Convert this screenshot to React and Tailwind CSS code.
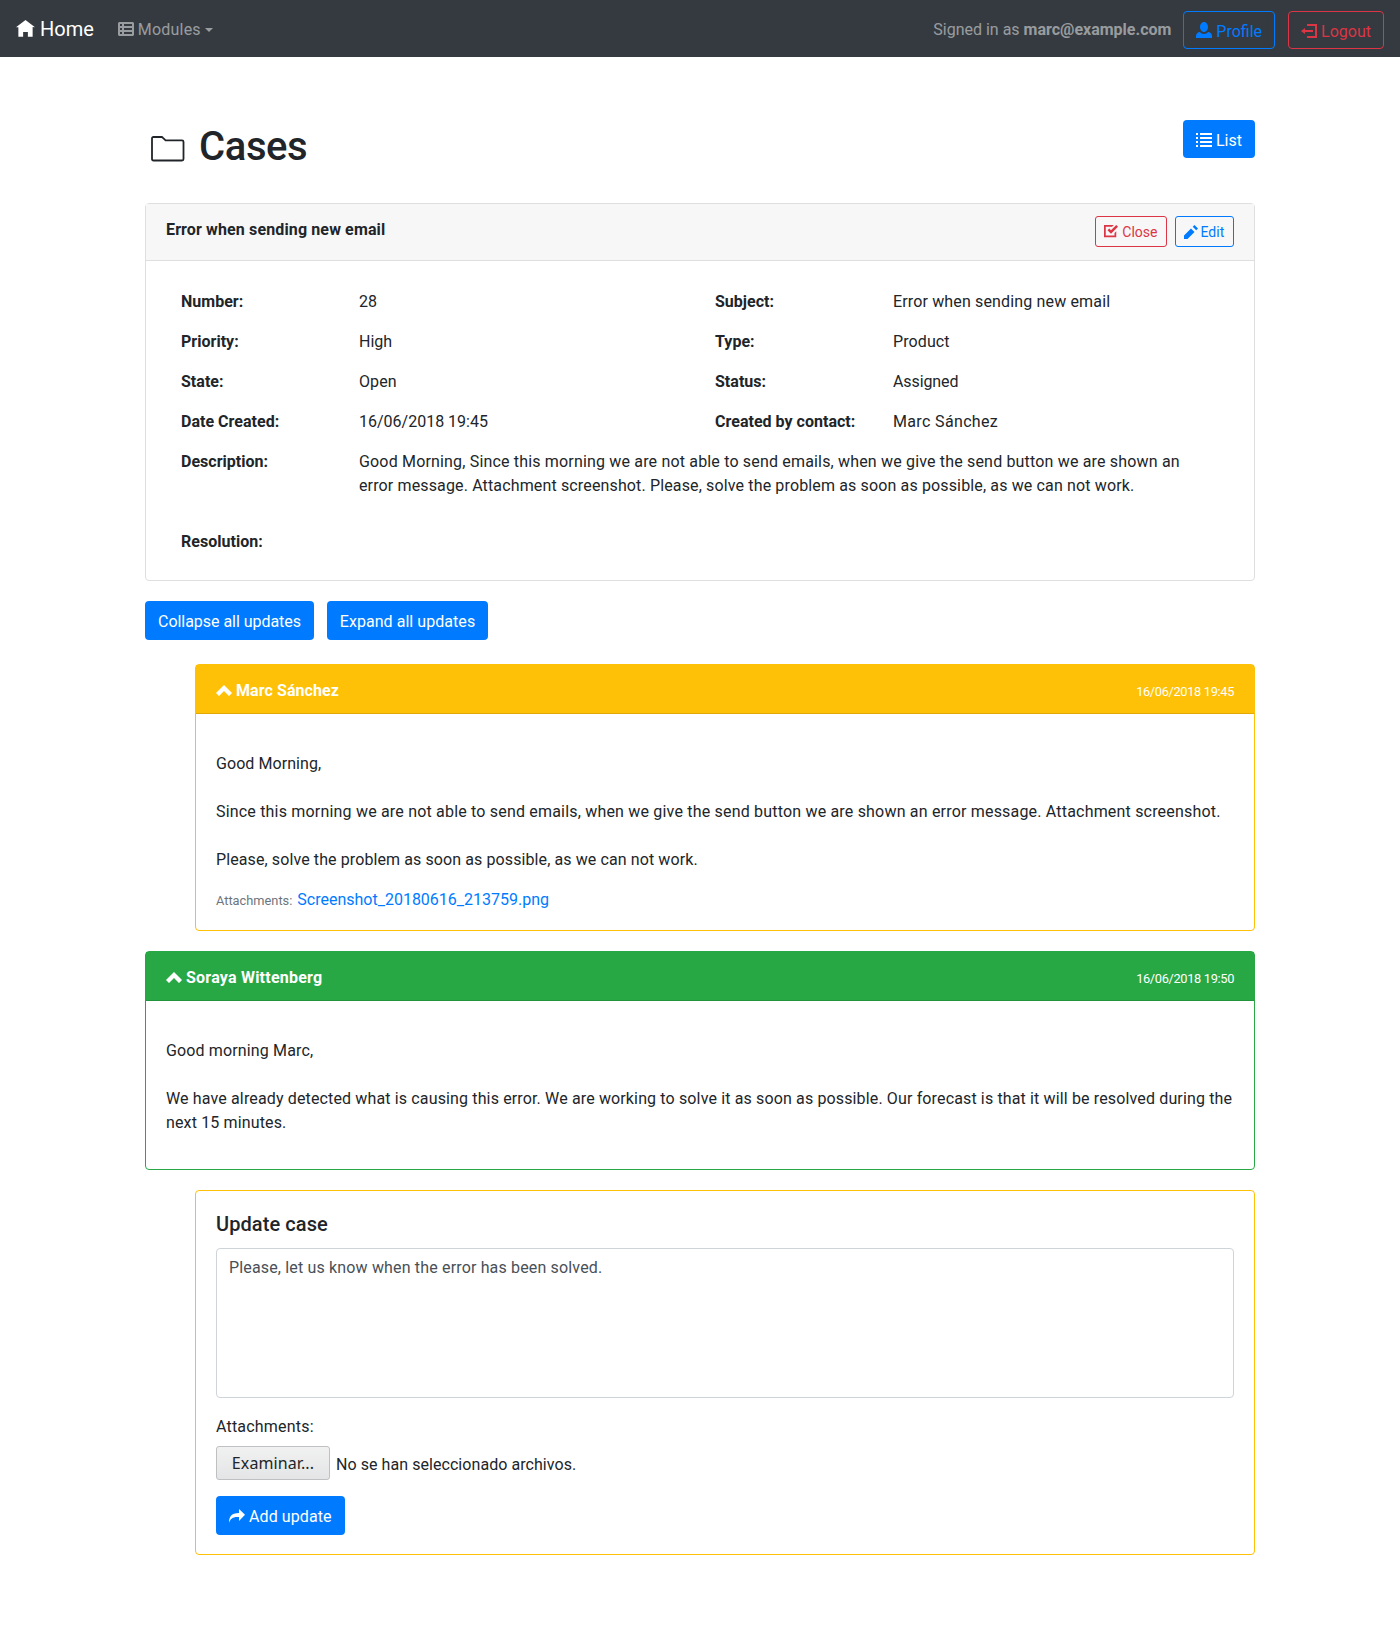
import React from "react";

const ICONS = {
  home: "M4 0l-4 3h1v4h2v-2h2v2h2v-4.03l1 .03-4-3z",
  sheet:
    "M.75 0c-.41 0-.75.34-.75.75v5.5c0 .41.34.75.75.75h6.5c.41 0 .75-.34.75-.75v-5.5c0-.41-.34-.75-.75-.75h-6.5zm.25 1h1v1h-1v-1zm2 0h4v1h-4v-1zm-2 2h1v1h-1v-1zm2 0h4v1h-4v-1zm-2 2h1v1h-1v-1zm2 0h4v1h-4v-1z",
  person:
    "M4 0c-1.1 0-2 1.12-2 2.5s.9 2.5 2 2.5 2-1.12 2-2.5-.9-2.5-2-2.5zm-2.09 5c-1.06.05-1.91.92-1.91 2v1h8v-1c0-1.08-.84-1.95-1.91-2-.54.61-1.28 1-2.09 1-.81 0-1.55-.39-2.09-1z",
  logout: "M3 0v1h4v5h-4v1h5v-7h-5zm-1 2l-2 1.5 2 1.5v-1h4v-1h-4v-1z",
  list: "M0 0v1h1v-1h-1zm2 0v1h6v-1h-6zm-2 2v1h1v-1h-1zm2 0v1h6v-1h-6zm-2 2v1h1v-1h-1zm2 0v1h6v-1h-6zm-2 2v1h1v-1h-1zm2 0v1h6v-1h-6z",
  task: "M0 0v7h7v-3.41l-1 1v1.41h-5v-5h3.59l1-1h-5.59zm7 0l-3 3-1-1-1 1 2 2 4-4-1-1z",
  pencil: "M6 0l-1 1 2 2 1-1-2-2zm-2 2l-4 4v2h2l4-4-2-2z",
  chevron: "M4 1l-4 4 1.5 1.5 2.5-2.5 2.5 2.5 1.5-1.5-4-4z",
  share: "M5 0v2c-4 0-5 2.05-5 5 .52-1.98 2-3 4-3h1v2l3-3.16-3-2.84z",
};

function Icon({ name, className = "size-4" }) {
  return (
    <svg viewBox="0 0 8 8" fill="currentColor" className={"shrink-0 " + className}>
      <path d={ICONS[name]} />
    </svg>
  );
}

function Field({ label, value, wide, className = "" }) {
  return (
    <div className={wide ? "col-span-6 grid grid-cols-6" : "col-span-3 grid grid-cols-3"}>
      <div className="px-[15px] font-bold tracking-[0.02px] whitespace-nowrap">{label}</div>
      <div className={(wide ? "col-span-5 px-[15px] " : "col-span-2 px-[15px] ") + className}>{value}</div>
    </div>
  );
}

function UpdateHeader({ name, date, className, nameClass }) {
  return (
    <div
      className={
        "flex h-[49px] items-center justify-between border-b border-black/12 px-5 pt-[3px] text-white " + className
      }
    >
      <div className={"flex items-center gap-1 font-bold " + nameClass}>
        <Icon name="chevron" />
        {name}
      </div>
      <div className="pt-0.5 text-[12.8px] tracking-[-0.33px]">{date}</div>
    </div>
  );
}

export default function App() {
  return (
    <div className="min-h-[1636px] bg-white font-['Roboto',sans-serif] text-base leading-6 text-[#212529]">
      <nav className="flex h-[57px] items-center bg-[#343a40] px-4">
        <div className="flex items-center gap-[5px] pt-px text-xl text-white">
          <Icon name="home" className="size-[19px]" />
          Home
        </div>
        <div className="ml-6 flex items-center pt-[3px] text-white/50">
          <Icon name="sheet" className="mr-1 size-4" />
          <span className="tracking-[0.2px]">Modules</span>
          <span className="ml-1 border-x-[4.8px] border-t-[4.8px] border-x-transparent border-t-white/50" />
        </div>
        <div className="ml-auto flex items-center gap-[13px]">
          <div className="-mr-px pt-0.5 text-white/50">
            Signed in as <b>marc@example.com</b>
          </div>
          <button className="mt-[3px] flex h-[38px] items-center gap-1 rounded border border-[#007bff] px-3 pt-1 text-[#007bff]">
            <Icon name="person" className="mb-1 size-4" />
            Profile
          </button>
          <button className="mt-[3px] flex h-[38px] items-center gap-1 rounded border border-[#dc3545] px-3 pt-1 text-[#dc3545]">
            <Icon name="logout" />
            Logout
          </button>
        </div>
      </nav>

      <main className="mx-auto w-[1110px] pt-[63px]">
        <div className="flex h-[83px] items-start justify-between">
          <h1 className="mt-[3px] flex items-center text-[40px] leading-[48px] font-medium tracking-[-0.4px]">
            <svg
              viewBox="0 0 34 26"
              className="mt-[3px] mr-3.5 ml-1.5 h-[26px] w-[34px]"
              fill="none"
              stroke="currentColor"
              strokeWidth="1.8"
            >
              <path d="M1 2.5Q1 1 2.5 1H10.5Q11.3 1 12 1.8L14.6 4.3H31Q32.5 4.3 32.5 5.8V23Q32.5 24.5 31 24.5H2.5Q1 24.5 1 23Z" />
            </svg>
            Cases
          </h1>
          <button className="flex h-[38px] items-center gap-1 rounded bg-[#007bff] px-[13px] pt-1 text-white">
            <Icon name="list" />
            List
          </button>
        </div>

        <section className="h-[378px] rounded border border-[#dfdfdf]">
          <div className="flex h-[57px] items-start justify-between border-b border-[#dfdfdf] bg-[#f7f7f7] px-5 pt-3">
            <div className="mt-0.5 font-bold tracking-[0.13px]">Error when sending new email</div>
            <div className="flex gap-2 text-sm">
              <button className="flex h-[31px] items-center gap-1 rounded-[3px] border border-[#dc3545] px-2 text-[#dc3545]">
                <Icon name="task" className="size-3.5" />
                Close
              </button>
              <button className="flex h-[31px] w-[59.5px] items-center gap-[3px] rounded-[3px] border border-[#007bff] pl-2 text-[#007bff]">
                <Icon name="pencil" className="size-3.5" />
                Edit
              </button>
            </div>
          </div>
          <div className="grid grid-cols-6 gap-y-4 px-5 pt-[29px]">
            <Field label="Number:" value="28" />
            <Field label="Subject:" value="Error when sending new email" className="tracking-[0.15px]" />
            <Field label="Priority:" value="High" />
            <Field label="Type:" value="Product" className="tracking-[0.1px]" />
            <Field label="State:" value="Open" className="tracking-[0.1px]" />
            <Field label="Status:" value="Assigned" className="tracking-[-0.1px]" />
            <Field label="Date Created:" value="16/06/2018 19:45" />
            <Field label="Created by contact:" value="Marc Sánchez" className="tracking-[0.35px]" />
            <Field
              wide
              label="Description:"
              value={
                <>
                  <span className="block tracking-[0.172px] whitespace-nowrap">
                    Good Morning, Since this morning we are not able to send emails, when we give the send button we are
                    shown an
                  </span>
                  <span className="block tracking-[0.14px] whitespace-nowrap">
                    error message. Attachment screenshot. Please, solve the problem as soon as possible, as we can not
                    work.
                  </span>
                </>
              }
            />
            <div className="col-span-6 pt-4">
              <Field wide label="Resolution:" value="" />
            </div>
          </div>
        </section>

        <div className="mt-5 flex gap-[13px] text-white">
          <button className="h-[39px] w-[169px] rounded bg-[#007bff] pt-0.5 tracking-[-0.04px]">
            Collapse all updates
          </button>
          <button className="h-[39px] w-[161px] rounded bg-[#007bff] pt-0.5 tracking-[0.05px]">
            Expand all updates
          </button>
        </div>

        <section className="mt-6 ml-[50px] h-[267px] rounded border border-[#ffc107]">
          <UpdateHeader
            name="Marc Sánchez"
            date="16/06/2018 19:45"
            className="bg-[#ffc107]"
            nameClass="tracking-[0.08px]"
          />
          <div className="px-5 pt-[38px]">
            <p className="mb-6 tracking-[0.06px]">Good Morning,</p>
            <p className="mb-6 tracking-[0.19px] whitespace-nowrap">
              Since this morning we are not able to send emails, when we give the send button we are shown an error
              message. Attachment screenshot.
            </p>
            <p className="mb-4 tracking-[0.1px]">Please, solve the problem as soon as possible, as we can not work.</p>
            <p>
              <span className="mr-[5px] text-[12.8px] text-[#6c757d]">Attachments:</span>
              <a className="text-[#007bff]">Screenshot_20180616_213759.png</a>
            </p>
          </div>
        </section>

        <section className="mt-5 h-[219px] rounded border border-[#28a745]">
          <UpdateHeader
            name="Soraya Wittenberg"
            date="16/06/2018 19:50"
            className="bg-[#28a745]"
            nameClass="tracking-[0.22px]"
          />
          <div className="px-5 pt-[38px] tracking-[0.14px]">
            <p className="mb-6">Good morning Marc,</p>
            <p>
              <span className="block whitespace-nowrap">
                We have already detected what is causing this error. We are working to solve it as soon as possible. Our
                forecast is that it will be resolved during the
              </span>
              <span className="block">next 15 minutes.</span>
            </p>
          </div>
        </section>

        <section className="mt-5 ml-[50px] h-[365px] rounded border border-[#ffc107] px-5 pt-[21px]">
          <h5 className="text-xl leading-6 font-medium tracking-[0.08px]">Update case</h5>
          <div className="mt-3 h-[150px] rounded border border-[#ced4da] px-3 py-[7px] tracking-[0.16px] text-[#495057]">
            Please, let us know when the error has been solved.
          </div>
          <div className="mt-[17px] tracking-[0.2px]">Attachments:</div>
          <div className="mt-[7px] flex items-center gap-1.5">
            <button className="h-[34px] w-[114px] rounded-[3px] border border-[#bfc0c1] bg-linear-to-b from-[#f1f1f1] to-[#e4e5e6] font-['Noto_Sans',sans-serif] leading-6 tracking-[0.1px]">
              Examinar...
            </button>
            <span className="pt-[3px] tracking-[0.06px]">No se han seleccionado archivos.</span>
          </div>
          <button className="mt-4 flex h-[39px] w-[129px] items-center gap-1 rounded bg-[#007bff] pt-0.5 pl-[13px] tracking-[0.1px] whitespace-nowrap text-white">
            <Icon name="share" />
            Add update
          </button>
        </section>
      </main>
    </div>
  );
}
